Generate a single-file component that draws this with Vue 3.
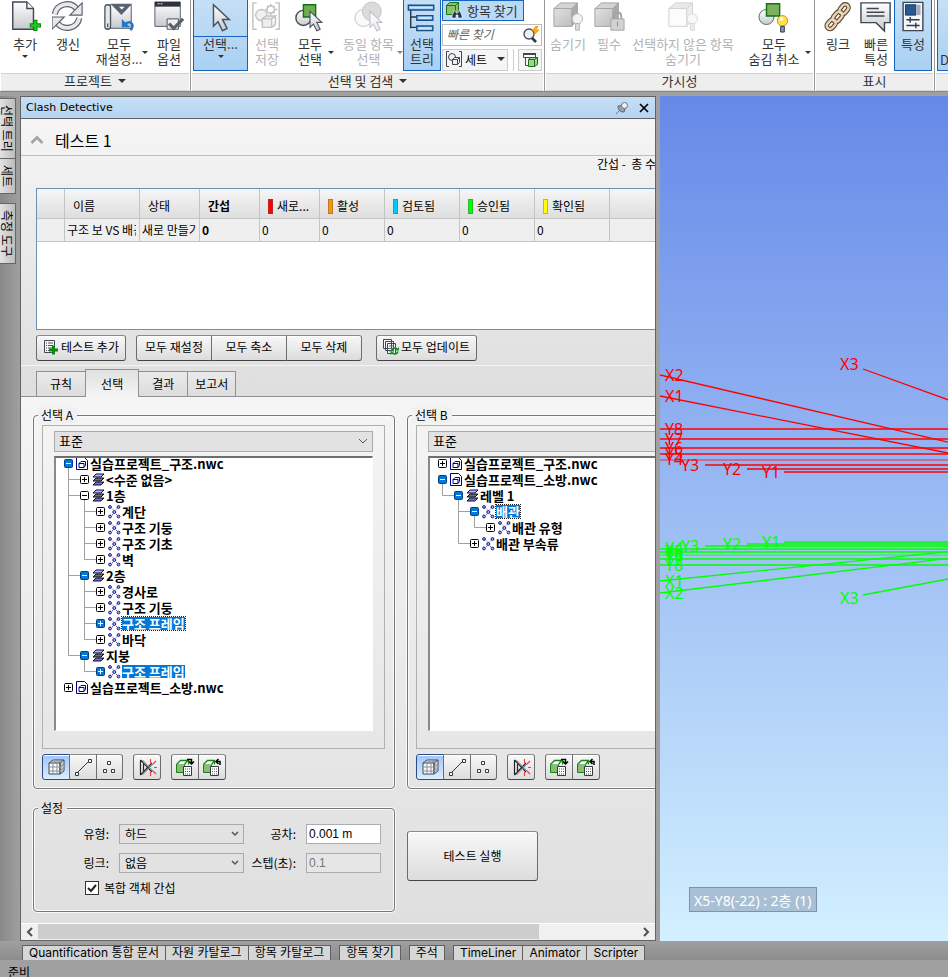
<script setup>
import { ref } from 'vue'

const page = '<path d="M4 1h15l7 7v22H4z" fill="url(#g-metal)" stroke="#3f4654" stroke-width="1.5"/><path d="M19 1v7h7" fill="#fff" stroke="#3f4654" stroke-width="1.5"/>'
const cursor = '<path d="M0 0v19l4-4 4 8 4-2-4-8h6z" fill="url(#g-metal)" stroke="#4a5260" stroke-width="1.3"/>'
const cube = '<path d="M2 8h19v19H2z" fill="url(#g-grey)"/><path d="M2 8l7-6h18l-6 6z" fill="#d4d4d4"/><path d="M21 8l6-6v18l-6 7z" fill="#aaa"/><path d="M2 8l7-6h18v18l-6 7H2zM2 8h19v19M21 8l6-6" fill="none" stroke="#a2a2a2"/>'
const greyBulb = '<circle cx="27" cy="19" r="5.5" fill="#f2f2f2" stroke="#b4b4b4"/><path d="M25 24h4v7h-4z" fill="#ddd" stroke="#b0b0b0"/>'

const icons = {
  add: page + '<path d="M28 20v12M22 26h12" stroke="#0a8a0a" stroke-width="4.5"/><path d="M28 21v10M23 26h10" stroke="#1bd41b" stroke-width="2"/>',
  refresh: '<g fill="none"><path d="M3 14C5 3 19 0 26 8M29 18C27 29 13 32 6 24" stroke="#5a606b" stroke-width="6.5"/><path d="M3 14C5 3 19 0 26 8M29 18C27 29 13 32 6 24" stroke="#e6e8ea" stroke-width="4"/></g><path d="M32 2v13H19zM0 30V17h13z" fill="#e6e8ea" stroke="#5a606b" stroke-width="1.2"/>',
  reset: '<path d="M7 4h23v25H7z" fill="url(#g-metal)" stroke="#4c5361"/><path d="M2 7c0-4 6-4 6 0v20c0 4-6 4-6 0zM5 24v4" fill="#e5e7e9" stroke="#4c5361" stroke-width="1.4"/><path d="M8 3h23L19.500 15z" fill="#596272"/><path d="M17 6h6l-3 3z" fill="#fff"/><path d="M24 24c6-4 10 2 5 7" fill="none" stroke="#2478c8" stroke-width="2.6"/><path d="M20 19v9h9z" fill="#2478c8"/>',
  options: '<path d="M2 1h27v26H2z" fill="url(#g-metal)" stroke="#555c68"/><path d="M2 1h27v5H2z" fill="#2d3240"/><path d="M5 3h2m1 0h2" stroke="#fff"/><path d="M15 19h12v11H15z" fill="#eee" stroke="#444b57"/><path d="M17 24l5 5 10-10" fill="none" stroke="#566173" stroke-width="3.5"/>',
  select: `<g transform="translate(9 4) scale(1.2)">${cursor}</g>`,
  save: '<g fill="none" stroke="#c2c2c2" stroke-width="1.500"><path d="M6 2H2v28h4M26 2h4v28h-4"/><circle cx="11" cy="15" r="6" fill="#f1f1f1"/><circle cx="21" cy="9" r="4"/><path d="M21 3v3M21 12v4M15 9h3M24 9h4M17 5l2 2M25 5l-2 2M25 13l-2-2"/><path d="M12 19h10v9H12zM12 19l4-3h10l-4 3M22 28l4-3v-9" fill="#eee"/></g>',
  selectAll: '<circle cx="10" cy="18" r="8" fill="url(#g-metal)" stroke="#444b57" stroke-width="1.500"/><path d="M10 4h13v13H10z" fill="#6fad50" stroke="#137013" stroke-width="1.500"/><g transform="translate(17 11) scale(.9)">' + cursor + '</g>',
  same: '<g opacity=".35"><circle cx="11" cy="18" r="9" fill="#eee" stroke="#555"/><circle cx="20" cy="11" r="10" fill="#999" stroke="#555"/><g transform="translate(18 11) scale(.9)">' + cursor + '</g></g>',
  tree: '<g fill="#8fc4ee" stroke="#1d4f86"><path d="M5 4v25M5 17h6M5 28h6" fill="none" stroke="#2a3442" stroke-width="1.500"/><path d="M2.500 4.500h27v5h-27zM11.500 15.500h17v5h-17zM11.500 26.500h17v5h-17z" stroke-width="1.500"/></g><path d="M4 7h24M13 18h14M13 29h14" stroke="#c9e6fb" stroke-width="2"/>',
  hide: cube + greyBulb,
  required: cube + '<path d="M22 20v-4c0-5 8-5 8 0v4" fill="none" stroke="#a4a4a4" stroke-width="2"/><path d="M19 19h14v12H19z" fill="#d2d2d2" stroke="#a4a4a4"/><path d="M26 22v5" stroke="#888"/>',
  hideOther: '<g opacity=".5">' + cube.replace('#aaa', '#ddd').replace('url(#g-grey)', '#fafafa') + greyBulb + '</g>',
  unhide: '<circle cx="9" cy="17" r="8" fill="url(#g-metal)" stroke="#5a606b"/><path d="M9 3h14v13H9z" fill="#7bb35d" stroke="#137013" stroke-width="1.500"/><circle cx="26" cy="21" r="5.500" fill="#ffe04a" stroke="#c58a12"/><circle cx="25" cy="19" r="2" fill="#fffbd0"/><path d="M24 27h4v6h-4z" fill="#8b93a0" stroke="#333a46"/>',
  link: '<g fill="none" transform="translate(1 1) rotate(-50 16 16)"><g stroke="#5b4a39" stroke-width="5"><rect x="0" y="12" width="11" height="7" rx="3.500"/><rect x="10" y="12" width="12" height="7" rx="3.500"/><rect x="21" y="12" width="11" height="7" rx="3.500"/></g><g stroke="#ecd3b4" stroke-width="2.600"><rect x="0" y="12" width="11" height="7" rx="3.500"/><rect x="10" y="12" width="12" height="7" rx="3.500"/><rect x="21" y="12" width="11" height="7" rx="3.500"/></g></g>',
  quick: '<path d="M1 2h31v21h-6v9l-9-9H1z" fill="url(#g-metal)" stroke="#3f4654" stroke-width="1.500"/><path d="M7 8h13M7 12h19M7 16h19" stroke="#3f4654" stroke-width="1.500"/>',
  props: '<path d="M6.500 1.500h21v30h-21z" fill="#f6f7f9" stroke="#3f4654" stroke-width="1.500"/><path d="M9 4h11v11H9z" fill="#265a90" stroke="#14345a"/><path d="M21 4h4v11h-4z" fill="#a9aeb6"/><path d="M10 20h14M10 26h14M14 17v6M20 23v6" stroke="#333a46" stroke-width="1.500"/>',
}

const tools = {
  cube: '<path d="M3 6h11v11H3zM3 6l4-3h11v11l-4 3V6l4-3" fill="#fafafa" stroke="#3f4654"/><path d="M7 6v11M11 6v11M3 10h11l4-3M3 14h11l4-3M5 5h11v10M11 3l-4 3M15 3l-4 3" fill="none" stroke="#8a919c"/>',
  line: '<path d="M4 16L16 4" stroke="#333a46"/><path d="M2.500 15.500h3v3h-3zM15.500 2.500h3v3h-3z" fill="#fff" stroke="#333a46"/>',
  points: '<path d="M8.500 4.500h3v3h-3zM4.500 12.500h3v3h-3zM12.500 12.500h3v3h-3z" fill="#fff" stroke="#333a46"/>',
  clash: '<path d="M3.500 3v15M3.500 3L15 15M3.500 18L15 6M6.500 7v7" fill="none" stroke="#20242c" stroke-width="1.200"/><path d="M5.500 3L17 15M5.500 18L17 6" fill="none" stroke="#7a808a"/><path d="M13.500 2v4M13.500 15v4M16 7l3-3M16 14l3 3M17 10.500h3" stroke="#ff3838" stroke-width="1.200"/>',
  toTree: '<path d="M1.500 7.500h8v8h-8z" fill="#8fbb6d" stroke="#168216"/><path d="M1.500 7.500l4-4h8v4M9.500 7.500l3-4" fill="#fff" stroke="#168216" stroke-width="1.300"/><path d="M8.500 9.500h8v9h-8z" fill="#fff" stroke="#333a46"/><path d="M10 12h5M10 14.500h5M10 17h5" stroke="#555" stroke-dasharray="1 1"/><path d="M12 2.500h4.500V7M14 4.500l2.500 2.500 2.500-2.500" fill="none" stroke="#000" stroke-width="1.500"/>',
  fromTree: '<path d="M1.500 7.500h8v8h-8z" fill="#8fbb6d" stroke="#168216"/><path d="M1.500 7.500l4-4h7v4M9.500 7.500l3-4" fill="#fff" stroke="#168216" stroke-width="1.300"/><path d="M8.500 9.500h8v9h-8z" fill="#fff" stroke="#333a46"/><path d="M10 12h5M10 14.500h5M10 17h5" stroke="#555" stroke-dasharray="1 1"/><path d="M18 8V4.500h-4M16.500 2L14 4.500 16.500 7" fill="none" stroke="#000" stroke-width="1.500"/>',
}

const nodeIcons = {
  file: '<path d="M.5 1.500h8l3 3v9H.5z" fill="#fff" stroke="#000080"/><path d="M3 7.500h5v4H3zM3 7.500l2-2h4.500v4L8 11.500" fill="none" stroke="#000080"/>',
  level: '<path d="M4 2h8l-3 3H1z" fill="#c0c0c0" stroke="#000080"/><path d="M4 6h8l-3 3H1z" fill="#808000" stroke="#000080"/><path d="M4 10h8l-3 3H1z" fill="#808080" stroke="#000080"/>',
  group: '<g fill="#b5bce0" stroke="#000080" stroke-width=".9"><circle cx="2" cy="3" r="1.400"/><circle cx="10.500" cy="3" r="1.400"/><circle cx="6.300" cy="8" r="1.500"/><circle cx="2" cy="12.500" r="1.400"/><circle cx="10.500" cy="12.500" r="1.400"/></g><path d="M5 5.500l-1-1M8 5.500l1-1M5 10l-1 1M8 10l1 1" stroke="#000080" stroke-width=".7"/>',
}

const guidePaths = { v: 'M8.500 0V16', t: 'M8.500 0V16M8.500 8.500H16', l: 'M8.500 0V8.500H16', _: '' }

const ribbon = [
  {
    title: '프로젝트',
    caret: true,
    size: 'w-project',
    items: [
      { icon: 'add', lines: ['추가'], under: true, w: 'w42' },
      { icon: 'refresh', lines: ['갱신'], w: 'w44' },
      { icon: 'reset', lines: ['모두', '재설정...'], caret: true, w: 'w58' },
      { icon: 'options', lines: ['파일', '옵션'], w: 'w42' },
    ],
  },
  {
    title: '선택 및 검색',
    caret: true,
    find: true,
    size: 'w-select',
    items: [
      { icon: 'select', lines: ['선택...'], under: true, active: true, split: true, w: 'w55' },
      { icon: 'save', lines: ['선택', '저장'], disabled: true, w: 'w38' },
      { icon: 'selectAll', lines: ['모두', '선택'], caret: true, w: 'w48' },
      { icon: 'same', lines: ['동일 항목', '선택'], caret: true, disabled: true, w: 'w69' },
      { icon: 'tree', lines: ['선택', '트리'], active: true, w: 'w38' },
    ],
  },
  {
    title: '가시성',
    size: 'w-visible',
    items: [
      { icon: 'hide', lines: ['숨기기'], disabled: true, w: 'w42' },
      { icon: 'required', lines: ['필수'], disabled: true, w: 'w40' },
      { icon: 'hideOther', lines: ['선택하지 않은 항목', '숨기기'], disabled: true, w: 'w108' },
      { icon: 'unhide', lines: ['모두', '숨김 취소'], caret: true, w: 'w74' },
    ],
  },
  {
    title: '표시',
    size: 'w-display',
    items: [
      { icon: 'link', lines: ['링크'], w: 'w40' },
      { icon: 'quick', lines: ['빠른', '특성'], w: 'w36' },
      { icon: 'props', lines: ['특성'], active: true, w: 'w38' },
    ],
  },
]

const columns = [
  { label: '' },
  { label: '이름' },
  { label: '상태' },
  { label: '간섭', bold: true },
  { label: '새로...', mark: 'red' },
  { label: '활성', mark: 'orange' },
  { label: '검토됨', mark: 'blue' },
  { label: '승인됨', mark: 'green' },
  { label: '확인됨', mark: 'yellow' },
  { label: '' },
]
const testRow = ['', '구조 보 VS 배관', '새로 만들기', '0', '0', '0', '0', '0', '0', '']

const trees = [
  {
    id: 'a',
    title: '선택 A',
    rows: [
      { g: '', icon: 'file', text: '실습프로젝트_구조.nwc', open: true, hot: true },
      { g: 't', icon: 'level', text: '<수준 없음>' },
      { g: 't', icon: 'level', text: '1층', open: true },
      { g: 'vt', icon: 'group', text: '계단' },
      { g: 'vt', icon: 'group', text: '구조 기둥' },
      { g: 'vt', icon: 'group', text: '구조 기초' },
      { g: 'vl', icon: 'group', text: '벽' },
      { g: 't', icon: 'level', text: '2층', open: true, hot: true },
      { g: 'vt', icon: 'group', text: '경사로' },
      { g: 'vt', icon: 'group', text: '구조 기둥' },
      { g: 'vt', icon: 'group', text: '구조 프레임', hot: true, selected: true, focus: true },
      { g: 'vl', icon: 'group', text: '바닥' },
      { g: 'l', icon: 'level', text: '지붕', open: true, hot: true },
      { g: '_l', icon: 'group', text: '구조 프레임', hot: true, selected: true },
      { g: '', icon: 'file', text: '실습프로젝트_소방.nwc' },
    ],
  },
  {
    id: 'b',
    title: '선택 B',
    rows: [
      { g: '', icon: 'file', text: '실습프로젝트_구조.nwc' },
      { g: '', icon: 'file', text: '실습프로젝트_소방.nwc', open: true, hot: true },
      { g: 'l', icon: 'level', text: '레벨 1', open: true, hot: true },
      { g: '_t', icon: 'group', text: '배관', open: true, hot: true, selected: true, focus: true },
      { g: '_vl', icon: 'group', text: '배관 유형' },
      { g: '_l', icon: 'group', text: '배관 부속류' },
    ],
  },
]

const tabs = ['규칙', '선택', '결과', '보고서']
const activeTab = ref('선택')

const tolerance = ref('0.001 m')
const step = ref('0.1')
const composite = ref(true)

const dockLeft = [['선택 트리', '세트'], ['측정 도구']]
const dockBottom = [
  ['Quantification 통합 문서', '자원 카탈로그', '항목 카탈로그'],
  ['항목 찾기'],
  ['주석'],
  ['TimeLiner', 'Animator', 'Scripter'],
]

// grid axes: label position, start of the line, rise per pixel
const REACH = 2000
const axes = [
  { n: 'X3', c: 'red', tx: 180, ty: 274, x: 203, y: 273, k: 0.362 },
  { n: 'X2', c: 'red', tx: 5, ty: 285, x: 0, y: 279, k: 0.233 },
  { n: 'X1', c: 'red', tx: 5, ty: 306, x: 0, y: 300, k: 0.198 },
  { n: 'Y8', c: 'red', tx: 5, ty: 339, x: 0, y: 333, k: 0 },
  { n: 'Y7', c: 'red', tx: 5, ty: 349, x: 0, y: 343, k: 0 },
  { n: 'Y6', c: 'red', tx: 5, ty: 358, x: 0, y: 352, k: 0 },
  { n: 'Y5', c: 'red', tx: 5, ty: 364, x: 0, y: 358, k: 0 },
  { n: 'Y4', c: 'red', tx: 5, ty: 369, x: 0, y: 364, k: 0, faint: true },
  { n: 'Y3', c: 'red', tx: 21, ty: 375, x: 45, y: 369, k: 0 },
  { n: 'Y2', c: 'red', tx: 63, ty: 379, x: 87, y: 373, k: 0 },
  { n: 'Y1', c: 'red', tx: 102, ty: 382, x: 124, y: 376, k: 0 },
  { n: 'Y1', c: 'lime', tx: 102, ty: 452, x: 124, y: 446, k: 0 },
  { n: 'Y2', c: 'lime', tx: 63, ty: 454, x: 87, y: 448, k: 0 },
  { n: 'Y3', c: 'lime', tx: 21, ty: 456, x: 45, y: 450, k: 0 },
  { n: 'Y4', c: 'lime', tx: 5, ty: 458, x: 0, y: 453, k: 0 },
  { n: 'Y5', c: 'lime', tx: 5, ty: 461, x: 0, y: 456, k: 0 },
  { n: 'Y6', c: 'lime', tx: 5, ty: 465, x: 0, y: 459, k: 0, faint: true },
  { n: 'Y7', c: 'lime', tx: 5, ty: 469, x: 0, y: 463, k: 0 },
  { n: 'Y8', c: 'lime', tx: 5, ty: 475, x: 0, y: 469, k: 0 },
  { n: 'X1', c: 'lime', tx: 5, ty: 491, x: 0, y: 485, k: -0.102 },
  { n: 'X2', c: 'lime', tx: 5, ty: 503, x: 0, y: 497, k: -0.12 },
  { n: 'X3', c: 'lime', tx: 180, ty: 508, x: 203, y: 499, k: -0.188 },
]
</script>

<template>
  <div class="app">
    <svg class="defs" width="0" height="0" aria-hidden="true">
      <defs>
        <linearGradient id="g-metal" x1="0" y1="0" x2="0" y2="1">
          <stop offset="0" stop-color="#fff" />
          <stop offset="1" stop-color="#c6c9cd" />
        </linearGradient>
        <linearGradient id="g-grey" x1="0" y1="0" x2="1" y2="1">
          <stop offset="0" stop-color="#e2e2e2" />
          <stop offset="1" stop-color="#bdbdbd" />
        </linearGradient>
      </defs>
    </svg>

    <header class="ribbon">
      <section v-for="group in ribbon" :key="group.title" class="group" :class="group.size">
        <div class="group-items">
          <button
            v-for="item in group.items"
            :key="item.icon"
            type="button"
            class="big-btn"
            :class="[item.w, { active: item.active, split: item.split }]"
            :disabled="item.disabled"
          >
            <svg class="big-icon" width="32" height="32" viewBox="0 0 34 34" aria-hidden="true" v-html="icons[item.icon]" />
            <span class="lines">
              <span v-for="line in item.lines" :key="line">{{ line }}</span>
            </span>
            <i v-if="item.under" class="caret under" />
            <i v-if="item.caret" class="caret side" />
          </button>

          <div v-if="group.find" class="find">
            <button type="button" class="find-items">
              <svg width="18" height="18" viewBox="0 0 18 18" aria-hidden="true">
                <path d="M1.500 4.500h9v9h-9zM1.500 4.500l3-3h9v8l-3 4M10.500 4.500l3-3" fill="#8cc06c" stroke="#15751a" />
                <path d="M9 10l-2 5v2h4v-3h2v3h4v-2l-2-5h-2v2h-2v-2z" fill="#21324c" stroke="#fff" stroke-width=".6" />
              </svg>
              항목 찾기
            </button>
            <div class="quick-find">
              <input type="text" placeholder="빠른 찾기" aria-label="빠른 찾기">
              <button type="button" aria-label="찾기">
                <svg width="18" height="18" viewBox="0 0 18 18" aria-hidden="true">
                  <circle cx="7" cy="8" r="5" fill="#e9f1f8" stroke="#4a5260" stroke-width="1.400" />
                  <path d="M10 12l4 4" stroke="#333a46" stroke-width="2.600" />
                  <path d="M14 0l-4 5h3l-1 4 5-5h-3l2-4z" fill="#ffb01e" stroke="#d98200" stroke-width=".6" />
                </svg>
              </button>
            </div>
            <div class="find-row">
              <button type="button" class="sets">
                <svg width="18" height="18" viewBox="0 0 18 18" aria-hidden="true">
                  <g fill="#eef0f2" stroke="#3f4654">
                    <path d="M4 1.500H1.500v15H4M14 1.500h2.500v15H14" fill="none" />
                    <circle cx="7" cy="7" r="3.500" />
                    <path d="M7.500 9.500h5v5h-5zM7.500 9.500l2-2h5v5l-2 2M12.500 9.500l2-2" />
                  </g>
                </svg>
                세트
                <i class="caret" />
              </button>
              <i class="divider" />
              <button type="button" class="inspect" aria-label="선택 검사기">
                <svg width="18" height="18" viewBox="0 0 18 18" aria-hidden="true">
                  <path d="M2.500 2.500h12v4h-12zM4.500 6.500v8H8" fill="#fff" stroke="#3f4654" />
                  <path d="M2 3h13" stroke="#3f4654" stroke-width="2" />
                  <path d="M7.500 8.500h6v7h-6zM7.500 8.500l2-2h7v7l-3 2M13.500 8.500l3-2" fill="#a8d090" stroke="#15751a" />
                </svg>
              </button>
            </div>
          </div>
        </div>
        <h2 class="group-title">{{ group.title }}<i v-if="group.caret" class="caret big" /></h2>
      </section>
      <section class="group rest">
        <div class="group-items">
          <button type="button" class="big-btn active cut">D</button>
        </div>
        <h2 class="group-title" />
      </section>
    </header>

    <main class="workspace">
      <nav class="dock-left">
        <div v-for="(set, i) in dockLeft" :key="i" class="dock-set">
          <button v-for="name in set" :key="name" type="button">{{ name }}</button>
        </div>
      </nav>

      <section class="panel">
        <header class="panel-title">
          <h1>Clash Detective</h1>
          <button type="button" aria-label="자동 숨기기">
            <svg width="14" height="14" viewBox="0 0 14 14" aria-hidden="true">
              <path d="M1 13l4-4" stroke="#777" />
              <path d="M3 5c0 4 2 6 6 6l1-3 2-2-4-4-3 3z" fill="#9aa0a8" stroke="#5d6470" />
              <circle cx="9.500" cy="4.500" r="3" fill="#eef1f4" stroke="#6d7480" />
            </svg>
          </button>
          <button type="button" aria-label="닫기">
            <svg width="10" height="10" viewBox="0 0 10 10" aria-hidden="true">
              <path d="M1 1l8 8M9 1L1 9" stroke="#000" stroke-width="1.700" />
            </svg>
          </button>
        </header>

        <div class="scroll-area">
          <div class="content">
            <div class="upper">
              <div class="test-head">
                <svg width="14" height="10" viewBox="0 0 14 10" aria-hidden="true">
                  <path d="M1.500 8L7 2.500 12.500 8" fill="none" stroke="#a6a6a6" stroke-width="3" />
                </svg>
                <h2>테스트 1</h2>
              </div>
              <p class="totals">간섭 -&nbsp; 총 수</p>

              <div class="grid-box">
                <table class="tests">
                  <thead>
                    <tr>
                      <th v-for="(col, i) in columns" :key="i" :class="{ strong: col.bold }">
                        <i v-if="col.mark" class="mark" :class="col.mark" />{{ col.label }}
                      </th>
                    </tr>
                  </thead>
                  <tbody>
                    <tr>
                      <td v-for="(cell, i) in testRow" :key="i" :class="{ strong: i === 3 }">
                        <div class="cell">{{ cell }}</div>
                      </td>
                    </tr>
                  </tbody>
                </table>
              </div>

              <div class="actions">
                <button type="button" class="btn add-test">
                  <svg width="16" height="16" viewBox="0 0 16 16" aria-hidden="true">
                    <path d="M1.500 1.500h10v12h-10z" fill="#f7f7f7" stroke="#3f4654" />
                    <path d="M3 4h1M3 6.500h1M3 9h1M3 11.500h1M5 4h5M5 6.500h5M5 9h4M5 11.500h3" stroke="#555" />
                    <path d="M10.500 6.500v9M6 11h9" stroke="#0a8a0a" stroke-width="3" />
                  </svg>
                  테스트 추가
                </button>
                <div class="btn-group">
                  <button type="button" class="btn">모두 재설정</button>
                  <button type="button" class="btn">모두 축소</button>
                  <button type="button" class="btn">모두 삭제</button>
                </div>
                <button type="button" class="btn update">
                  <svg width="16" height="16" viewBox="0 0 16 16" aria-hidden="true">
                    <path d="M.5.500h8v9h-8zM2.500 2.500h8v9h-8zM4.500 4.500h8v10h-8z" fill="#f7f7f7" stroke="#3f4654" />
                    <path d="M6 7h5M6 9.500h4M6 12h3" stroke="#666" />
                    <path d="M8.500 11.500c1-3 4-3 6-1M15 12.500c-1 3-4 3-6 1.500" fill="none" stroke="#15902a" stroke-width="1.700" />
                    <path d="M16 8v3.500h-4zM7.500 16v-3.500h4z" fill="#15902a" />
                  </svg>
                  모두 업데이트
                </button>
              </div>

              <div class="tabs" role="tablist">
                <button
                  v-for="tab in tabs"
                  :key="tab"
                  type="button"
                  role="tab"
                  :aria-selected="tab === activeTab"
                  @click="activeTab = tab"
                >
                  {{ tab }}
                </button>
              </div>
            </div>

            <div class="lower">
              <div class="pair">
                <fieldset v-for="side in trees" :key="side.id" class="box side">
                  <legend>{{ side.title }}</legend>
                  <div class="tree-box">
                    <div class="select wide">
                      <select :aria-label="side.title">
                        <option>표준</option>
                      </select>
                      <svg width="10" height="6" viewBox="0 0 10 6" aria-hidden="true"><path d="M1 1l4 4 4-4" fill="none" stroke="#555" /></svg>
                    </div>
                    <ul class="tree" role="tree">
                      <li v-for="(row, i) in side.rows" :key="i" role="treeitem" :aria-selected="!!row.selected">
                        <svg v-for="(g, j) in row.g" :key="j" width="16" height="16" class="guide" aria-hidden="true">
                          <path :d="guidePaths[g]" />
                        </svg>
                        <svg width="16" height="16" class="expander" :class="{ hot: row.hot }" aria-hidden="true">
                          <path v-if="row.g" class="rule" d="M0 8.500H4" />
                          <path v-if="row.open" class="rule" d="M8.500 12V16" />
                          <rect x="4.500" y="4.500" width="8" height="8" rx="1" />
                          <path class="sign" :d="row.open ? 'M6 8.500H11' : 'M6 8.500H11M8.500 6V11'" />
                        </svg>
                        <svg width="14" height="15" viewBox="0 0 14 15" aria-hidden="true" v-html="nodeIcons[row.icon]" />
                        <span class="node" :class="{ selected: row.selected, focus: row.focus }">{{ row.text }}</span>
                      </li>
                    </ul>
                  </div>
                  <div class="tools">
                    <div class="btn-group">
                      <button type="button" class="btn tool on" aria-label="곡면"><svg width="21" height="21" v-html="tools.cube" /></button>
                      <button type="button" class="btn tool" aria-label="선"><svg width="21" height="21" v-html="tools.line" /></button>
                      <button type="button" class="btn tool" aria-label="점"><svg width="21" height="21" v-html="tools.points" /></button>
                    </div>
                    <button type="button" class="btn tool" aria-label="자체 교차"><svg width="21" height="21" v-html="tools.clash" /></button>
                    <div class="btn-group">
                      <button type="button" class="btn tool" aria-label="현재 선택 사용"><svg width="21" height="21" v-html="tools.toTree" /></button>
                      <button type="button" class="btn tool" aria-label="장면에서 선택"><svg width="21" height="21" v-html="tools.fromTree" /></button>
                    </div>
                  </div>
                </fieldset>
              </div>

              <div class="pair bottom">
                <fieldset class="box settings">
                  <legend>설정</legend>
                  <div class="fields">
                    <label for="type">유형:</label>
                    <div class="select">
                      <select id="type"><option>하드</option></select>
                      <svg width="8" height="6" viewBox="0 0 8 6" aria-hidden="true"><path d="M1 1l3 3 3-3" fill="none" stroke="#555" stroke-width="1.500" /></svg>
                    </div>
                    <label for="tolerance">공차:</label>
                    <input id="tolerance" v-model="tolerance" type="text">
                    <label for="link">링크:</label>
                    <div class="select">
                      <select id="link"><option>없음</option></select>
                      <svg width="8" height="6" viewBox="0 0 8 6" aria-hidden="true"><path d="M1 1l3 3 3-3" fill="none" stroke="#555" stroke-width="1.500" /></svg>
                    </div>
                    <label for="step">스텝(초):</label>
                    <input id="step" v-model="step" type="text" disabled>
                  </div>
                  <label class="check">
                    <input v-model="composite" type="checkbox">
                    <svg width="14" height="14" viewBox="0 0 14 14" aria-hidden="true">
                      <rect x=".5" y=".5" width="13" height="13" fill="#fff" stroke="#333" />
                      <path v-if="composite" d="M3 7l3 3 5-6" fill="none" stroke="#222" stroke-width="2" />
                    </svg>
                    복합 객체 간섭
                  </label>
                </fieldset>
                <button type="button" class="btn run">테스트 실행</button>
              </div>
            </div>
          </div>
        </div>

        <div class="hscroll">
          <button type="button" aria-label="왼쪽으로">
            <svg width="7" height="10" viewBox="0 0 7 10" aria-hidden="true"><path d="M6 1L2 5l4 4" fill="none" stroke="#505050" stroke-width="2" /></svg>
          </button>
          <div class="track"><div class="thumb" /></div>
          <button type="button" aria-label="오른쪽으로">
            <svg width="7" height="10" viewBox="0 0 7 10" aria-hidden="true"><path d="M1 1l4 4-4 4" fill="none" stroke="#505050" stroke-width="2" /></svg>
          </button>
        </div>
      </section>

      <section class="view">
        <svg class="axes" width="100%" height="100%" aria-hidden="true">
          <g v-for="(a, i) in axes" :key="i">
            <line
              :x1="a.x"
              :y1="a.y"
              :x2="a.x + REACH"
              :y2="a.y + REACH * a.k"
              :stroke="a.c"
              :stroke-opacity="a.faint ? 0.5 : 1"
              :stroke-width="a.k ? 1.3 : 1.6"
            />
            <text :x="a.tx" :y="a.ty" :fill="a.c">{{ a.n }}</text>
          </g>
        </svg>
        <div class="location">X5-Y8(-22) : 2층 (1)</div>
      </section>
    </main>

    <nav class="dock-bottom">
      <div v-for="(set, i) in dockBottom" :key="i" class="dock-set">
        <button v-for="name in set" :key="name" type="button">{{ name }}</button>
      </div>
    </nav>
    <footer class="status">준비</footer>
  </div>
</template>

<style>
body {
  margin: 0;
}
</style>

<style scoped>
.app {
  display: flex;
  flex-direction: column;
  height: 100vh;
  min-height: 900px;
  overflow: hidden;
  background: #a0a0a0;
  color: #000;
  font-family: "Noto Sans CJK KR", sans-serif;
  font-size: 12px;
  line-height: 16px;
}

* {
  box-sizing: border-box;
}

button,
input,
select {
  margin: 0;
  padding: 0;
  border: 0;
  border-radius: 0;
  background: none;
  color: inherit;
  font: inherit;
}

h1,
h2,
p,
ul {
  margin: 0;
  padding: 0;
  font-size: inherit;
  font-weight: normal;
}

svg {
  display: block;
  flex: none;
}

.defs {
  position: absolute;
}

/* ribbon */
.ribbon {
  display: flex;
  flex: none;
  background: #fff;
  border-bottom: 1px solid #868686;
  font-size: 13px;
  line-height: 15px;
  color: #333;
}

.group {
  display: flex;
  flex: none;
  flex-direction: column;
  padding: 0 1px;
  border-right: 1px solid #9a9a9a;
}

.group.rest {
  flex: 1;
  min-width: 0;
  padding-right: 0;
  border-right: 0;
}

.w-project { width: 191px; }
.w-select { width: 354px; }
.w-visible { width: 270px; }
.w-display { width: 120px; }

.group-items {
  display: flex;
  height: 72px;
  padding-left: 1px;
  overflow: hidden;
}

.w-project .group-items {
  padding-left: 3px;
}

.w-display .group-items {
  padding-left: 2px;
}

.group-title {
  display: flex;
  align-items: center;
  justify-content: center;
  gap: 6px;
  height: 18px;
  margin-top: 1px;
  padding-bottom: 3px;
  border-top: 1px solid #d0d0d0;
  background: #eee;
  border-bottom: 1px solid #d8d8d8;
}

.caret {
  width: 0;
  border: 3px solid transparent;
  border-top-color: #333;
  border-bottom: 0;
}

.caret.big {
  border-width: 4px;
  border-bottom: 0;
}

.big-btn {
  position: relative;
  display: flex;
  flex: none;
  flex-direction: column;
  align-items: center;
  height: 71px;
  padding-top: 1px;
  white-space: nowrap;
}

.w36 { width: 36px; }
.w38 { width: 38px; }
.w40 { width: 40px; }
.w42 { width: 42px; }
.w44 { width: 44px; }
.w48 { width: 48px; }
.w55 { width: 55px; }
.w58 { width: 58px; }
.w69 { width: 69px; }
.w74 { width: 74px; }
.w108 { width: 108px; }

.big-btn:disabled {
  color: #b3b3b3;
}

.big-btn.active {
  background: linear-gradient(#c5dff5, #a9d0f3);
  box-shadow: inset 1px 0 #1565c0, inset -1px -1px #1565c0;
}

.big-btn.split::before {
  content: "";
  position: absolute;
  top: 36px;
  right: 0;
  left: 0;
  height: 1px;
  background: #1565c0;
}

.big-btn.cut {
  width: 40px;
  padding: 52px 0 0 3px;
  align-items: flex-start;
}

.lines {
  display: flex;
  flex-direction: column;
  align-items: center;
  margin-top: 3px;
}

.caret.under {
  margin-top: 4px;
}

.caret.side {
  position: absolute;
  top: 51px;
  right: 0;
}

.big-btn:disabled .caret {
  border-top-color: #888;
}

.find {
  display: flex;
  flex-direction: column;
  gap: 3px;
  width: 100px;
  margin-left: 1px;
}

.find-items {
  display: flex;
  align-items: center;
  gap: 4px;
  width: 82px;
  height: 21px;
  padding: 0 0 1px 2px;
  border: 1px solid #1565c0;
  background: #b9d9f5;
  white-space: nowrap;
}

.quick-find {
  display: flex;
  align-items: center;
  height: 22px;
  padding-right: 1px;
  border: 1px solid #bcbcbc;
  background: #fff;
}

.quick-find input {
  flex: 1;
  min-width: 0;
  padding: 0 0 3px 4px;
  font-size: 12px;
  font-style: italic;
}

.quick-find input::placeholder {
  color: #666;
}

.find-row {
  display: flex;
  justify-content: space-between;
}

.divider {
  width: 1px;
  background: #ccc;
}

.sets,
.inspect {
  display: flex;
  align-items: center;
  height: 22px;
  border: 1px solid #ccc;
  background: #f5f5f5;
}

.sets {
  gap: 2px;
  width: 66px;
  padding: 0 2px 2px;
  color: #000;
  font-size: 12px;
  white-space: nowrap;
}

.sets .caret {
  border-width: 4px;
  border-bottom: 0;
  margin-left: auto;
}

.inspect {
  justify-content: center;
  width: 24px;
}

/* docked window */
.workspace {
  display: grid;
  flex: 1;
  grid-template-columns: 20px minmax(0, 159fr) 4px minmax(0, 72fr);
  min-height: 0;
  padding-top: 4px;
}

.dock-left {
  display: flex;
  flex-direction: column;
  gap: 9px;
  padding-top: 2px;
  background: linear-gradient(90deg, #888, #a0a0a0);
}

.dock-left .dock-set {
  width: 16px;
  border: 1px solid #666;
  border-left: 0;
}

.dock-left button {
  display: block;
  width: 15px;
  padding: 6px 0;
  background: linear-gradient(90deg, #e2e2e2, #bdbdbd);
  line-height: 15px;
  text-orientation: sideways;
  writing-mode: vertical-rl;
}

.dock-left button + button {
  border-top: 1px solid #666;
}

.panel {
  display: flex;
  flex-direction: column;
  min-width: 0;
  min-height: 0;
  border: 1px solid #636363;
  background: #e0e0e0;
}

.panel-title {
  display: flex;
  flex: none;
  align-items: center;
  gap: 10px;
  height: 22px;
  padding: 0 6px 0 5px;
  border-bottom: 1px solid #636363;
  background: linear-gradient(#c5def5, #b5d5f2);
}

.panel-title h1 {
  flex: 1;
  font-family: "DejaVu Sans", sans-serif;
  font-size: 11px;
}

.scroll-area {
  flex: 1;
  min-height: 0;
  overflow: hidden;
}

.content {
  display: flex;
  flex-direction: column;
  min-width: 764px;
  height: 100%;
}

.upper {
  flex: none;
  background: linear-gradient(#f5f5f5, #dedede);
}

.test-head {
  display: flex;
  align-items: center;
  gap: 11px;
  height: 37px;
  padding: 6px 9px 0;
  border-bottom: 1px solid #bebebe;
}

.test-head h2 {
  font-size: 16px;
  line-height: 24px;
}

.totals {
  height: 32px;
  padding-left: 576px;
  white-space: nowrap;
}

.grid-box {
  height: 142px;
  margin: 0 16px 0 15px;
  border: 1px solid #6d8fb3;
  background: #fff;
}

.tests {
  width: 100%;
  border-collapse: separate;
  border-spacing: 0;
  table-layout: fixed;
}

.tests th,
.tests td {
  overflow: hidden;
  border-right: 1px solid #c4c4c4;
  border-bottom: 1px solid #c4c4c4;
  font-weight: normal;
  text-align: left;
  white-space: nowrap;
}

.tests th {
  width: 75px;
  height: 30px;
  padding: 5px 0 0 8px;
  background: linear-gradient(#f6f6f6, #dedede);
}

.tests th:nth-child(1) { width: 28px; }
.tests th:nth-child(3),
.tests th:nth-child(4),
.tests th:nth-child(5) { width: 60px; }
.tests th:nth-child(6) { width: 65px; }
.tests th:nth-child(10) { width: auto; }

.tests td {
  height: 23px;
  padding: 0 3px 0 2px;
  background: #efefef;
}

.cell {
  overflow: hidden;
}

.tests .strong {
  font-weight: bold;
}

.mark {
  display: inline-block;
  width: 5px;
  height: 15px;
  margin-right: 4px;
  border: 1px solid rgba(90, 90, 90, 0.4);
  vertical-align: -3px;
}

.mark.red { background: #f00; }
.mark.orange { background: #ff9300; }
.mark.blue { background: #00c8ff; }
.mark.green { background: #0f0; }
.mark.yellow { background: #ff0; }

.btn {
  display: flex;
  align-items: center;
  justify-content: center;
  border: 1px solid #6d6d6d;
  border-top-color: #8a8a8a;
  border-bottom-color: #444;
  border-radius: 3px;
  background: linear-gradient(#f8f8f8, #dcdcdc);
  box-shadow: inset 0 1px #fff;
  white-space: nowrap;
}

.btn-group {
  display: flex;
}

.btn-group .btn:not(:first-child) {
  margin-left: -1px;
  border-top-left-radius: 0;
  border-bottom-left-radius: 0;
}

.btn-group .btn:not(:last-child) {
  border-top-right-radius: 0;
  border-bottom-right-radius: 0;
}

.actions {
  display: flex;
  gap: 10px;
  padding: 5px 15px 4px;
  border-bottom: 1px solid #f4f4f4;
}

.actions .btn {
  height: 26px;
  padding-bottom: 2px;
}

.actions .btn-group .btn {
  width: 76px;
}

.add-test {
  gap: 2px;
  width: 90px;
}

.update {
  gap: 2px;
  width: 101px;
  margin-left: 4px;
}

.tabs {
  display: flex;
  align-items: flex-end;
  height: 31px;
  padding-left: 15px;
  box-shadow: inset 0 -1px #8f8f94;
}

.tabs button {
  height: 26px;
  margin-right: -1px;
  padding: 0 13px;
  border: 1px solid #8f8f94;
  background: linear-gradient(#eaeaea, #dcdcdc);
}

.tabs button:last-child {
  padding: 0 7px;
}

.tabs button[aria-selected="true"] {
  height: 28px;
  padding: 0 15px;
  border-bottom: 0;
  background: linear-gradient(#e0e0e0, #f5f5f5);
}

.lower {
  display: flex;
  flex: 1;
  flex-direction: column;
  gap: 11px;
  min-height: 0;
  padding: 10px 16px 11px 12px;
  background: linear-gradient(#f5f5f5, #dfdfdf);
}

.pair {
  display: grid;
  flex: 1;
  grid-template-columns: 1fr 1fr;
  gap: 12px;
  min-height: 0;
}

.pair.bottom {
  flex: none;
}

.box {
  min-width: 0;
  margin: 0;
  padding: 0 4px 8px;
  border: 1px solid #777;
  border-radius: 4px;
  box-shadow: 0 0 0 1px #fafafa, inset 0 0 0 1px #fafafa;
}

.box legend {
  padding: 0 4px 0 3px;
  background: #f1f1f1;
}

.settings legend {
  background: #e4e4e4;
}

.side {
  display: flex;
  flex-direction: column;
}

.tree-box {
  display: flex;
  flex: 1;
  flex-direction: column;
  gap: 4px;
  min-height: 0;
  margin: 2px 5px 5px 4px;
  padding: 5px 11px 17px;
  border: 1px solid #b0b0b0;
}

.select {
  position: relative;
  height: 20px;
}

.select select {
  width: 100%;
  height: 100%;
  padding: 0 5px 1px;
  border: 1px solid #aaa;
  background: #e2e2e2;
  appearance: none;
}

.select svg {
  position: absolute;
  top: 7px;
  right: 5px;
  pointer-events: none;
}

.select.wide {
  flex: none;
  height: 21px;
  font-size: 13px;
}

.select.wide select {
  padding: 0 4px 2px;
}

.tree {
  flex: 1;
  min-height: 0;
  overflow: hidden;
  border: 1px solid #fff;
  border-top: 2px solid #6e6e6e;
  border-left: 2px solid #8a8a8a;
  background: #fff;
  list-style: none;
}

.tree li {
  display: flex;
  align-items: center;
  height: 16px;
  padding-left: 4px;
}

.tree li:first-child {
  margin-top: -3px;
}

.guide path,
.rule {
  fill: none;
  stroke: #a0a0a0;
}

.expander rect {
  fill: #fff;
  stroke: #000;
}

.expander .sign {
  stroke: #000;
}

.expander.hot rect {
  fill: #0078d7;
  stroke: #003f80;
}

.expander.hot .sign {
  stroke: #fff;
}

.node {
  font-size: 13px;
  font-weight: bold;
  line-height: 13px;
  white-space: nowrap;
}

.node.selected {
  background: #0078d7;
  color: #fff;
}

.node.focus {
  outline: 1px dotted #222;
}

.tools {
  display: flex;
  gap: 10px;
  margin-left: 4px;
}

.tool {
  width: 28px;
  height: 26px;
}

.tools .btn-group .tool:nth-child(3) {
  width: 27px;
}

.tool.on {
  border-color: #2b4a86;
  background: linear-gradient(#9fc6f5, #dceeff);
}

.settings {
  padding: 8px 14px 15px 4px;
}

.fields {
  display: grid;
  grid-template-columns: 71px 125px 42px 75px;
  gap: 9px 10px;
}

.fields label {
  display: flex;
  justify-content: flex-end;
  line-height: 20px;
  white-space: nowrap;
}

.fields input {
  height: 20px;
  padding: 0 2px;
  border: 1px solid #abadb3;
  background: #fff;
  font-family: "Liberation Sans", "Noto Sans CJK KR", sans-serif;
}

.fields input:disabled {
  background: #e6e6e6;
  color: #777;
}

.check {
  display: flex;
  align-items: center;
  gap: 5px;
  margin: 7px 0 0 47px;
}

.check input {
  position: absolute;
  opacity: 0;
}

.run {
  justify-self: start;
  align-self: center;
  width: 131px;
  height: 50px;
}

.hscroll {
  display: flex;
  flex: none;
  height: 17px;
  border-top: 1px solid #fff;
  background: #f0f0f0;
}

.hscroll button {
  display: flex;
  align-items: center;
  justify-content: center;
  width: 17px;
}

.track {
  flex: 1;
}

.thumb {
  width: 83.5%;
  height: 15px;
  background: #cdcdcd;
}

/* 3D view */
.view {
  position: relative;
  grid-column: 4;
  min-width: 0;
  overflow: hidden;
  background: linear-gradient(#6689e8, #d2f0ff);
}

.axes {
  position: absolute;
  inset: 0;
  font-family: "Noto Sans", sans-serif;
  font-size: 16px;
}

.location {
  position: absolute;
  bottom: 29px;
  left: 29px;
  padding: 5px 4px 2px;
  border: 1px solid #7f93a8;
  background: #a9bfd4;
  color: #fff;
  font-family: "Noto Sans", "Noto Sans CJK KR", sans-serif;
  font-size: 14px;
  line-height: 16px;
}

.dock-bottom {
  display: flex;
  flex: none;
  gap: 8px;
  padding: 4px 0 0 22px;
  background: linear-gradient(#a0a0a0, #8c8c8c);
}

.dock-bottom .dock-set {
  display: flex;
  border: 1px solid #606060;
  border-bottom: 0;
}

.dock-bottom button {
  height: 14px;
  padding: 0 6px;
  background: #d6d6d6;
  font-family: Inter, "Noto Sans CJK KR", sans-serif;
  line-height: 14px;
  white-space: nowrap;
}

.dock-bottom button + button {
  border-left: 1px solid #606060;
}

.status {
  flex: none;
  height: 17px;
  padding: 4px 8px 0;
}
</style>
